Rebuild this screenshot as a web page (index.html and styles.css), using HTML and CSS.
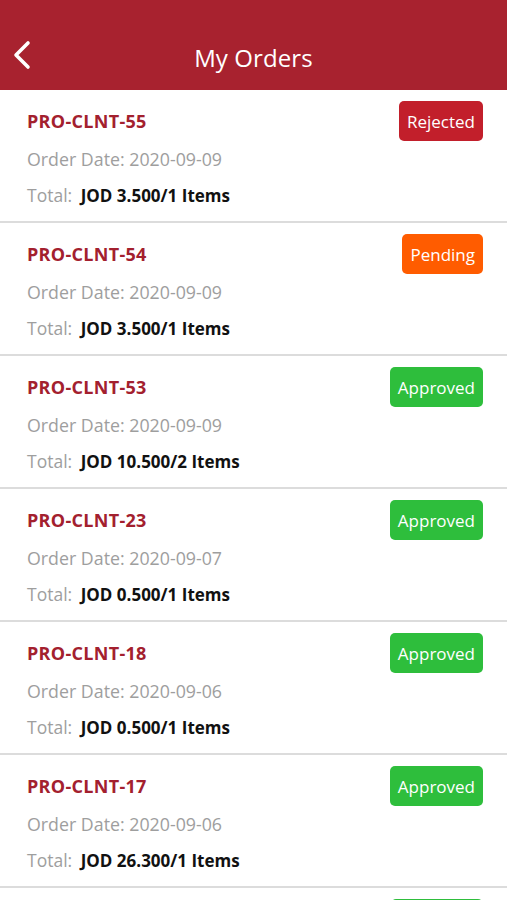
FILE: index.html
```html
<!DOCTYPE html>
<html>
<head>
<meta charset="utf-8">
<link rel="stylesheet" href="styles.css">
</head>
<body>
<div class="app">
  <header class="topbar">
    <svg class="back" width="20" height="30" viewBox="0 0 20 30"><path d="M16 3 L4 15 L16 27" fill="none" stroke="#fff" stroke-width="3.6" stroke-linecap="round" stroke-linejoin="round"/></svg>
    <h1 class="title">My Orders</h1>
  </header>
  <ul class="orders">
    <li class="order">
      <div class="info">
        <div class="oid">PRO-CLNT-55</div>
        <div class="date">Order Date: 2020-09-09</div>
        <div class="total"><span class="lbl">Total:</span> <b>JOD 3.500/1 Items</b></div>
      </div>
      <span class="badge rejected">Rejected</span>
    </li>
    <li class="order">
      <div class="info">
        <div class="oid">PRO-CLNT-54</div>
        <div class="date">Order Date: 2020-09-09</div>
        <div class="total"><span class="lbl">Total:</span> <b>JOD 3.500/1 Items</b></div>
      </div>
      <span class="badge pending">Pending</span>
    </li>
    <li class="order">
      <div class="info">
        <div class="oid">PRO-CLNT-53</div>
        <div class="date">Order Date: 2020-09-09</div>
        <div class="total"><span class="lbl">Total:</span> <b>JOD 10.500/2 Items</b></div>
      </div>
      <span class="badge approved">Approved</span>
    </li>
    <li class="order">
      <div class="info">
        <div class="oid">PRO-CLNT-23</div>
        <div class="date">Order Date: 2020-09-07</div>
        <div class="total"><span class="lbl">Total:</span> <b>JOD 0.500/1 Items</b></div>
      </div>
      <span class="badge approved">Approved</span>
    </li>
    <li class="order">
      <div class="info">
        <div class="oid">PRO-CLNT-18</div>
        <div class="date">Order Date: 2020-09-06</div>
        <div class="total"><span class="lbl">Total:</span> <b>JOD 0.500/1 Items</b></div>
      </div>
      <span class="badge approved">Approved</span>
    </li>
    <li class="order">
      <div class="info">
        <div class="oid">PRO-CLNT-17</div>
        <div class="date">Order Date: 2020-09-06</div>
        <div class="total"><span class="lbl">Total:</span> <b>JOD 26.300/1 Items</b></div>
      </div>
      <span class="badge approved">Approved</span>
    </li>
    <li class="order">
      <div class="info"></div>
      <span class="badge approved wide"></span>
    </li>
  </ul>
</div>
</body>
</html>
```
FILE: styles.css
```css
* { box-sizing: border-box; }
html, body { margin: 0; padding: 0; }
body {
  width: 507px;
  height: 900px;
  overflow: hidden;
  background: #fff;
  font-family: "Open Sans", "Noto Sans", sans-serif;
}
.app { display: flex; flex-direction: column; }
.topbar {
  height: 90px;
  background: #A8222F;
  display: flex;
  align-items: center;
  justify-content: center;
  position: relative;
  padding-top: 24px;
}
.back { position: absolute; left: 12px; top: 40px; }
.title {
  margin: 0;
  color: #fff;
  font-weight: 400;
  font-size: 24px;
  letter-spacing: 0.1px;
}
.orders { list-style: none; margin: 0; padding: 0; }
.order {
  height: 133px;
  border-bottom: 2px solid #DCDCDC;
  display: flex;
  justify-content: space-between;
  align-items: flex-start;
  padding: 11px 24px 0 27px;
}
.info { display: flex; flex-direction: column; }
.oid {
  color: #A3202E;
  font-weight: 700;
  font-size: 18px;
  line-height: 22px;
  margin-top: 9px;
  letter-spacing: 0.3px;
}
.date {
  color: #9E9E9E;
  font-size: 17.8px;
  line-height: 22px;
  margin-top: 16px;
}
.total {
  font-size: 17.5px;
  line-height: 22px;
  margin-top: 14px;
  color: #111;
}
.total .lbl { color: #9E9E9E; }
.total b { font-weight: 700; font-size: 17px; margin-left: 4px; }
.badge {
  height: 40px;
  padding: 0 8px;
  border-radius: 5px;
  color: #fff;
  font-size: 17px;
  display: flex;
  align-items: center;
  justify-content: center;
}
.wide { width: 92px; }
.rejected { background: #C21F2B; }
.pending { background: #FF5C00; }
.approved { background: #2EBE3C; }
```
